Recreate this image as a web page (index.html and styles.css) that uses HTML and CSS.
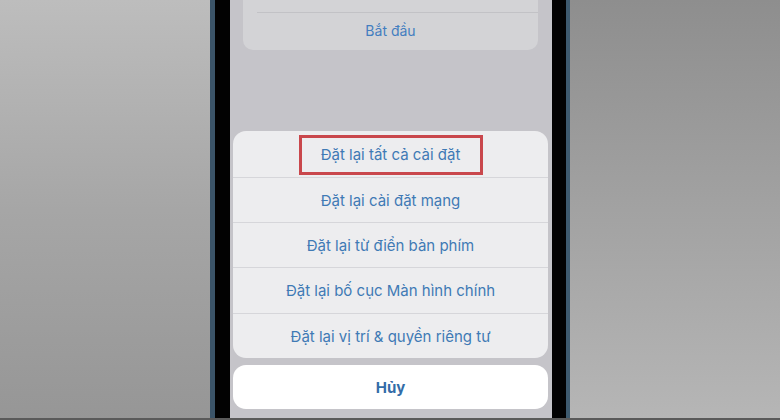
FILE: index.html
```html
<!DOCTYPE html>
<html lang="vi">
<head>
<meta charset="utf-8">
<link rel="stylesheet" href="styles.css">
</head>
<body>
<div class="stage">
  <div class="phone">
    <div class="screen">
      <div class="top-card">
        <div class="top-divider"></div>
        <div class="top-label">Bắt đầu</div>
      </div>
      <div class="spacer"></div>
      <div class="sheet">
        <div class="row row-first">
          <span>Đặt lại tất cả cài đặt</span>
          <div class="highlight"></div>
        </div>
        <div class="row">Đặt lại cài đặt mạng</div>
        <div class="row">Đặt lại từ điển bàn phím</div>
        <div class="row row-tall">Đặt lại bố cục Màn hình chính</div>
        <div class="row">Đặt lại vị trí &amp; quyền riêng tư</div>
      </div>
      <div class="cancel">Hủy</div>
    </div>
  </div>
</div>
<div class="bottom-strip"></div>
</body>
</html>
```
FILE: styles.css
```css
html, body {
  margin: 0;
  padding: 0;
}
body {
  width: 780px;
  height: 420px;
  overflow: hidden;
  font-family: Inter, "Noto Sans", sans-serif;
  background:
    linear-gradient(to bottom, #bdbdbd 0%, #a6a6a6 50%, #969696 100%) left top / 390px 100% no-repeat,
    linear-gradient(to bottom, #8e8e8e 0%, #a2a2a2 50%, #b6b6b6 100%) right top / 390px 100% no-repeat;
}
.stage {
  height: 418px;
  display: flex;
}
.phone {
  margin-left: 210px;
  width: 360px;
  box-sizing: border-box;
  border-left: 5px solid #3b5468;
  border-right: 4px solid #3e5a6e;
  padding: 0 14px 0 15px;
  background: #020202;
}
.screen {
  height: 100%;
  background: #c5c4c9;
  display: flex;
  flex-direction: column;
  padding: 0 4px 0 3px;
  box-sizing: border-box;
}
.top-card {
  margin: 0 10px 0 10px;
  height: 50px;
  background: #d3d3d6;
  border-radius: 0 0 10px 10px;
  display: flex;
  flex-direction: column;
}
.top-divider {
  margin: 12px 0 0 14px;
  height: 1px;
  background: #c2c2c6;
}
.top-label {
  flex: 1;
  display: flex;
  align-items: center;
  justify-content: center;
  color: #437ec0;
  font-size: 14px;
  padding-bottom: 2px;
}
.spacer {
  height: 81px;
  flex-shrink: 0;
}
.sheet {
  background: #ededef;
  border-radius: 13px;
  display: flex;
  flex-direction: column;
  overflow: hidden;
  flex-shrink: 0;
}
.row {
  height: 45px;
  box-sizing: border-box;
  display: flex;
  align-items: center;
  justify-content: center;
  color: #3f7ab5;
  font-size: 15px;
  border-top: 1px solid #d6d6da;
  position: relative;
}
.row-first {
  border-top: none;
  height: 46px;
}
.row-tall {
  height: 46px;
}
.highlight {
  position: absolute;
  left: 66px;
  top: 4px;
  width: 184px;
  height: 40px;
  box-sizing: border-box;
  border: 3px solid #c9474c;
}
.cancel {
  margin-top: 7px;
  height: 44px;
  flex-shrink: 0;
  background: #ffffff;
  border-radius: 13px;
  display: flex;
  align-items: center;
  justify-content: center;
  color: #336ca8;
  font-size: 15px;
  font-weight: 700;
}
.bottom-strip {
  height: 2px;
  background: #5a5a5a;
}
```
